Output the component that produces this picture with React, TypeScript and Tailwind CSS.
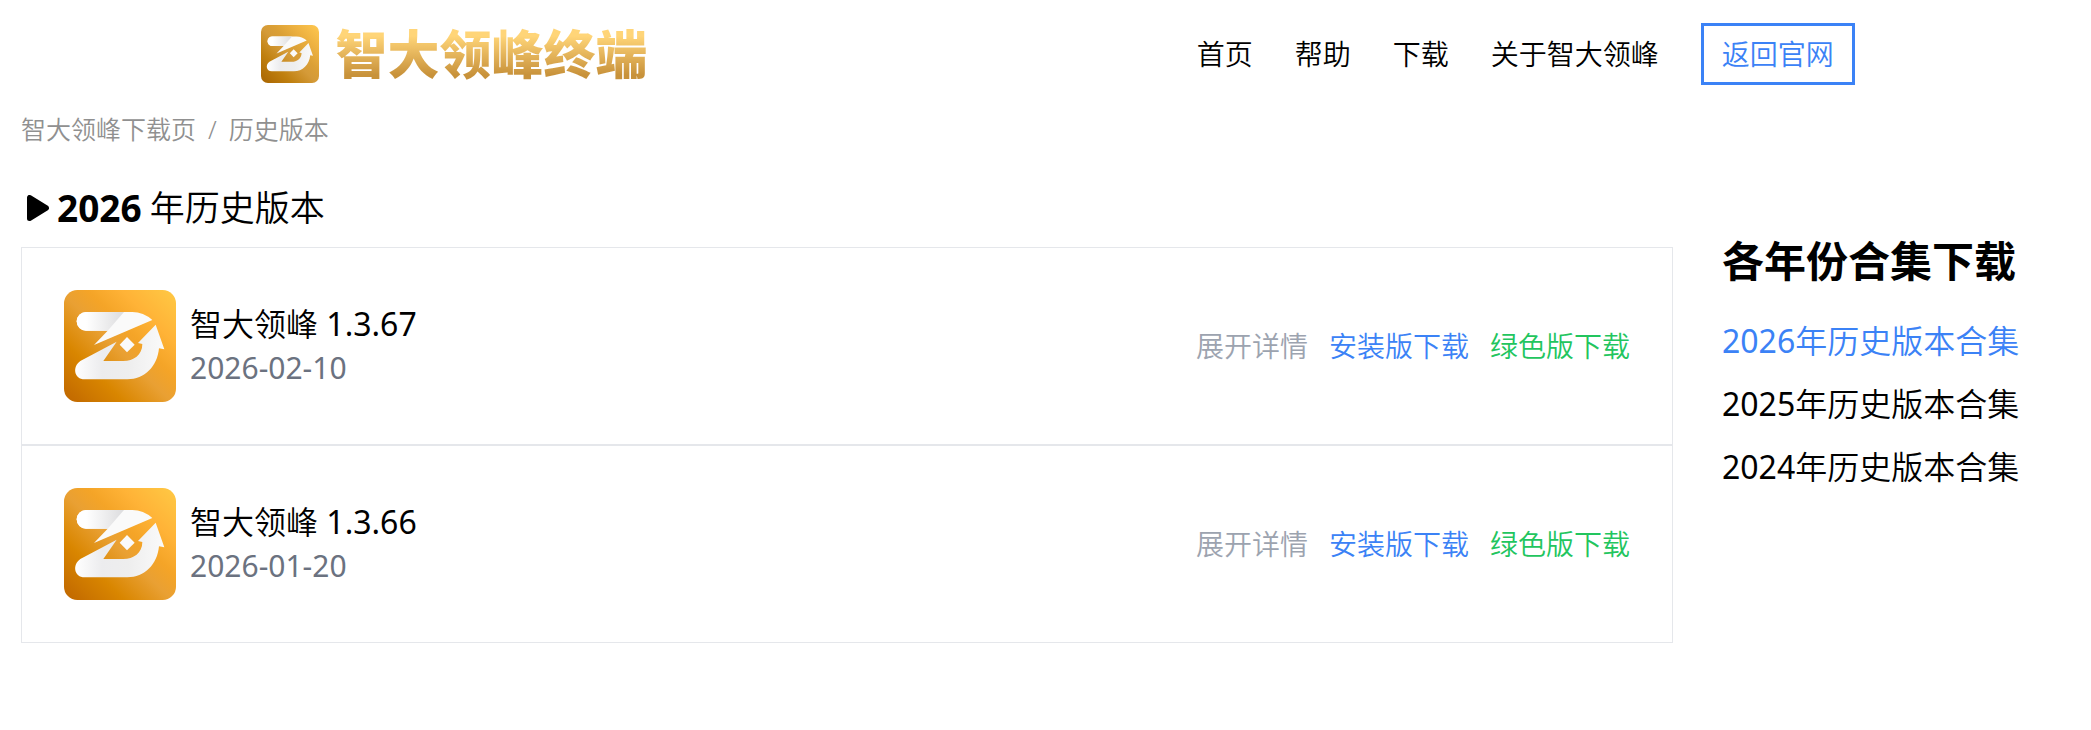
import { useId } from 'react'

interface Release {
  version: string
  date: string
}

const releases: Release[] = [
  { version: '1.3.67', date: '2026-02-10' },
  { version: '1.3.66', date: '2026-01-20' },
]

const navItems = ['首页', '帮助', '下载', '关于智大领峰']
const years = ['2026', '2025', '2024']

function AppLogo({ className, muted = false }: { className: string; muted?: boolean }) {
  const id = useId()
  const bg = `${id}bg`
  const bar = `${id}bar`
  const tail = `${id}tail`

  return (
    <svg className={className} viewBox="0 0 336 336" aria-hidden="true">
      <defs>
        <linearGradient id={bg} x1="0" y1="1" x2="1" y2="0">
          <stop offset="0" stopColor={muted ? '#a86400' : '#bf6600'} />
          <stop offset="0.27" stopColor={muted ? '#c08010' : '#d98600'} />
          <stop offset="0.48" stopColor={muted ? '#d49a38' : '#e9a033'} />
          <stop offset="0.6" stopColor={muted ? '#dba036' : '#f4a427'} />
          <stop offset="0.76" stopColor={muted ? '#ecb040' : '#ffb337'} />
          <stop offset="1" stopColor={muted ? '#ffc850' : '#ffc945'} />
        </linearGradient>
        <linearGradient id={bar} x1="0" y1="0" x2="1" y2="0">
          <stop offset="0.2" stopColor="#ffffff" />
          <stop offset="1" stopColor="#dcdcde" />
        </linearGradient>
        <linearGradient id={tail} x1="0" y1="0" x2="1" y2="0">
          <stop offset="0" stopColor="#ffffff" />
          <stop offset="0.3" stopColor="#ececee" />
          <stop offset="0.6" stopColor="#eeeeee" />
          <stop offset="1" stopColor="#fafafa" />
        </linearGradient>
      </defs>
      <rect width="336" height="336" rx="40" fill={`url(#${bg})`} />
      <path d="M66 66H205Q238 66 265 90L90 165L131 122H66A28 28 0 0 1 66 66Z" fill="#fafafa" />
      <path d="M66 66H180L131 122H66A28 28 0 0 1 66 66Z" fill={`url(#${bar})`} />
      <path
        d="M158 155L118 213H178C208 213 235 195 235 162L222 159L275 104L301 178L285 175C280 230 242 268 190 268H62C30 268 24 230 49 213Z"
        fill={`url(#${tail})`}
      />
      <path d="M189 141L212 164L189 187L167 164Z" fill="#fafafa" />
    </svg>
  )
}

function Header() {
  return (
    <header className="flex items-center justify-between pt-[23px] pr-[11.3%] pl-[12.5%]">
      <a href="#" className="flex items-center gap-4">
        <AppLogo className="size-[58px]" muted />
        <span className="bg-linear-to-b from-[#ffd578] from-20% to-[#c8923a] to-85% bg-clip-text text-[52px] leading-[60px] font-black whitespace-nowrap text-transparent">
          智大领峰终端
        </span>
      </a>
      <nav className="flex items-center gap-[42px] text-[28px] leading-10 whitespace-nowrap">
        {navItems.map((item) => (
          <a key={item} href="#">
            {item}
          </a>
        ))}
        <a href="#" className="border-3 border-[#3b82f6] px-[18px] py-2 text-[#3b82f6]">
          返回官网
        </a>
      </nav>
    </header>
  )
}

function ReleaseRow({ version, date }: Release) {
  return (
    <li className="flex items-center justify-between border border-[#e5e7eb] p-[42px]">
      <div className="flex items-center gap-3.5">
        <AppLogo className="size-28" />
        <div className="pb-0.5">
          <h3 className="text-[32px] leading-[46px]">
            智大领峰 <span className="font-normal">{version}</span>
          </h3>
          <time className="block text-[30px] leading-[42px] font-normal text-[#6b7280]">{date}</time>
        </div>
      </div>
      <div className="flex gap-[21px] text-[28px] leading-[42px] whitespace-nowrap">
        <button type="button" className="text-[#9ca3af]">
          展开详情
        </button>
        <a href="#" className="text-[#3b82f6]">
          安装版下载
        </a>
        <a href="#" className="text-[#22c55e]">
          绿色版下载
        </a>
      </div>
    </li>
  )
}

export default function App() {
  return (
    <div className="min-h-screen bg-white font-['Noto_Sans','Noto_Sans_CJK_SC',sans-serif] font-[350] text-black">
      <Header />

      <div className="flex items-start px-[21px] pt-6">
        <main className="flex-1">
          <nav className="flex gap-3 text-[25px] leading-10 text-[#909090]" aria-label="breadcrumb">
            <a href="#">智大领峰下载页</a>
            <span>/</span>
            <a href="#">历史版本</a>
          </nav>

          <h2 className="mt-8 mb-3 flex items-center text-[35px] leading-[54px]">
            <svg className="mr-2 ml-1.5 h-[26px] w-[22px]" viewBox="0 0 22 26" aria-hidden="true">
              <path
                d="M2.5 2.5V23.5L19.5 13Z"
                fill="currentColor"
                stroke="currentColor"
                strokeWidth="5"
                strokeLinejoin="round"
              />
            </svg>
            <strong className="mr-2 text-[37px] font-bold">2026</strong>
            年历史版本
          </h2>

          <ul>
            {releases.map((release) => (
              <ReleaseRow key={release.version} {...release} />
            ))}
          </ul>
        </main>

        <aside className="w-[397px] pt-[120px] pl-[49px] whitespace-nowrap">
          <h2 className="text-[42px] leading-[64px] font-bold">各年份合集下载</h2>
          <ul className="mt-4 text-[32px] leading-[63px]">
            {years.map((year) => (
              <li key={year}>
                <a href="#" className={year === '2026' ? 'text-[#3b82f6]' : 'text-black'}>
                  <span className="font-normal">{year}</span>年历史版本合集
                </a>
              </li>
            ))}
          </ul>
        </aside>
      </div>
    </div>
  )
}
